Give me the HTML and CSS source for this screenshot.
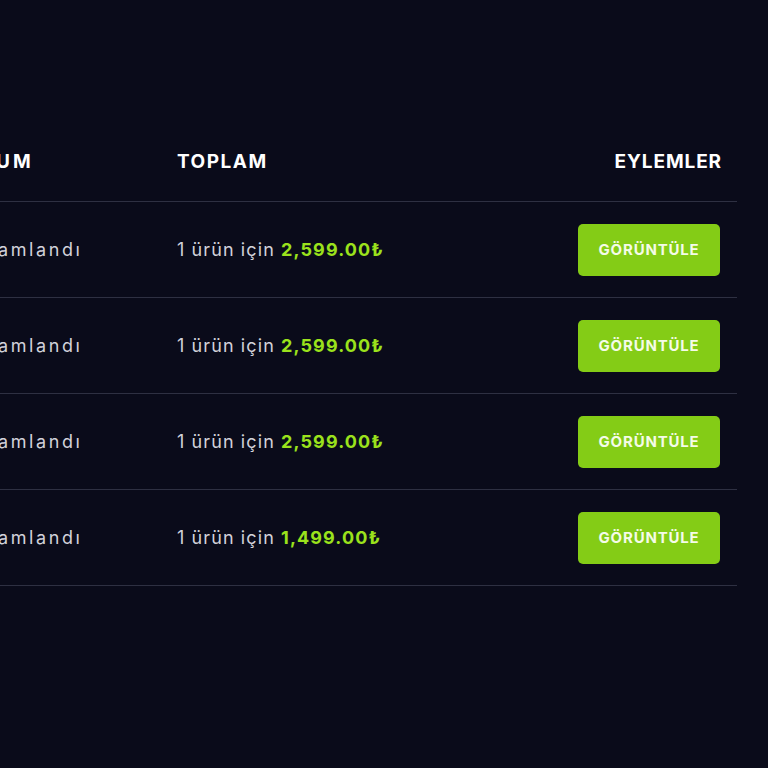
FILE: index.html
```html
<!DOCTYPE html>
<html lang="tr">

<head>
  <meta charset="UTF-8" />
  <meta name="viewport" content="width=device-width, initial-scale=1.0" />
  <title>Siparişler</title>
  <link rel="stylesheet" href="styles.css">
</head>

<body>
  <div class="siparisler">
    <table class="tablo">
      <thead>
        <tr>
          <th class="durum">DURUM</th>
          <th class="toplam">TOPLAM</th>
          <th class="eylem">EYLEMLER</th>
        </tr>
      </thead>
      <tbody>
        <tr>
          <td class="durum">Tamamlandı</td>
          <td class="toplam">1 ürün için <span class="fiyat">2,599.00₺</span></td>
          <td class="eylem"><button class="btn-goruntule">GÖRÜNTÜLE</button></td>
        </tr>
        <tr>
          <td class="durum">Tamamlandı</td>
          <td class="toplam">1 ürün için <span class="fiyat">2,599.00₺</span></td>
          <td class="eylem"><button class="btn-goruntule">GÖRÜNTÜLE</button></td>
        </tr>
        <tr>
          <td class="durum">Tamamlandı</td>
          <td class="toplam">1 ürün için <span class="fiyat">2,599.00₺</span></td>
          <td class="eylem"><button class="btn-goruntule">GÖRÜNTÜLE</button></td>
        </tr>
        <tr>
          <td class="durum">Tamamlandı</td>
          <td class="toplam">1 ürün için <span class="fiyat">1,499.00₺</span></td>
          <td class="eylem"><button class="btn-goruntule">GÖRÜNTÜLE</button></td>
        </tr>
      </tbody>
    </table>
  </div>
</body>

</html>
```

FILE: styles.css
```css
body,
html {
  margin: 0;
  padding: 0;
  height: 100%;
  font-family: Inter, 'Noto Sans', sans-serif;
  background-color: #0a0b1a;
  color: #d2d2da;
  overflow: hidden;
}

.siparisler {
  padding-top: 121px;
  overflow: hidden;
}

.tablo {
  margin-left: -53px;
  width: 790px;
  border-collapse: collapse;
  table-layout: fixed;
}

.tablo th,
.tablo td {
  padding: 0 15px;
  border-bottom: 1px solid #2e3042;
  vertical-align: middle;
}

.tablo th {
  height: 80px;
  color: #ffffff;
  font-size: 19px;
  font-weight: 700;
  letter-spacing: 1.5px;
  text-align: left;
}

.tablo td {
  height: 95px;
  font-size: 18px;
  letter-spacing: 1.1px;
}

.durum {
  width: 185px;
}

/* ilk sütun ekranın solundan taşıyor */
.tablo th.durum {
  letter-spacing: 3px;
  text-indent: -15px;
}

.tablo td.durum {
  letter-spacing: 2.6px;
  text-indent: -8px;
}

.toplam {
  width: 300px;
}

.tablo .eylem {
  text-align: right;
}

.tablo th.eylem {
  letter-spacing: 0.9px;
}

.fiyat {
  color: #9be21c;
  font-weight: 700;
}

.btn-goruntule {
  width: 142px;
  height: 52px;
  margin-right: 2px;
  background-color: #84cc16;
  border: none;
  border-radius: 5px;
  color: #f4fbe8;
  font-family: inherit;
  font-size: 15px;
  font-weight: 700;
  letter-spacing: 0.8px;
  cursor: pointer;
}
```
